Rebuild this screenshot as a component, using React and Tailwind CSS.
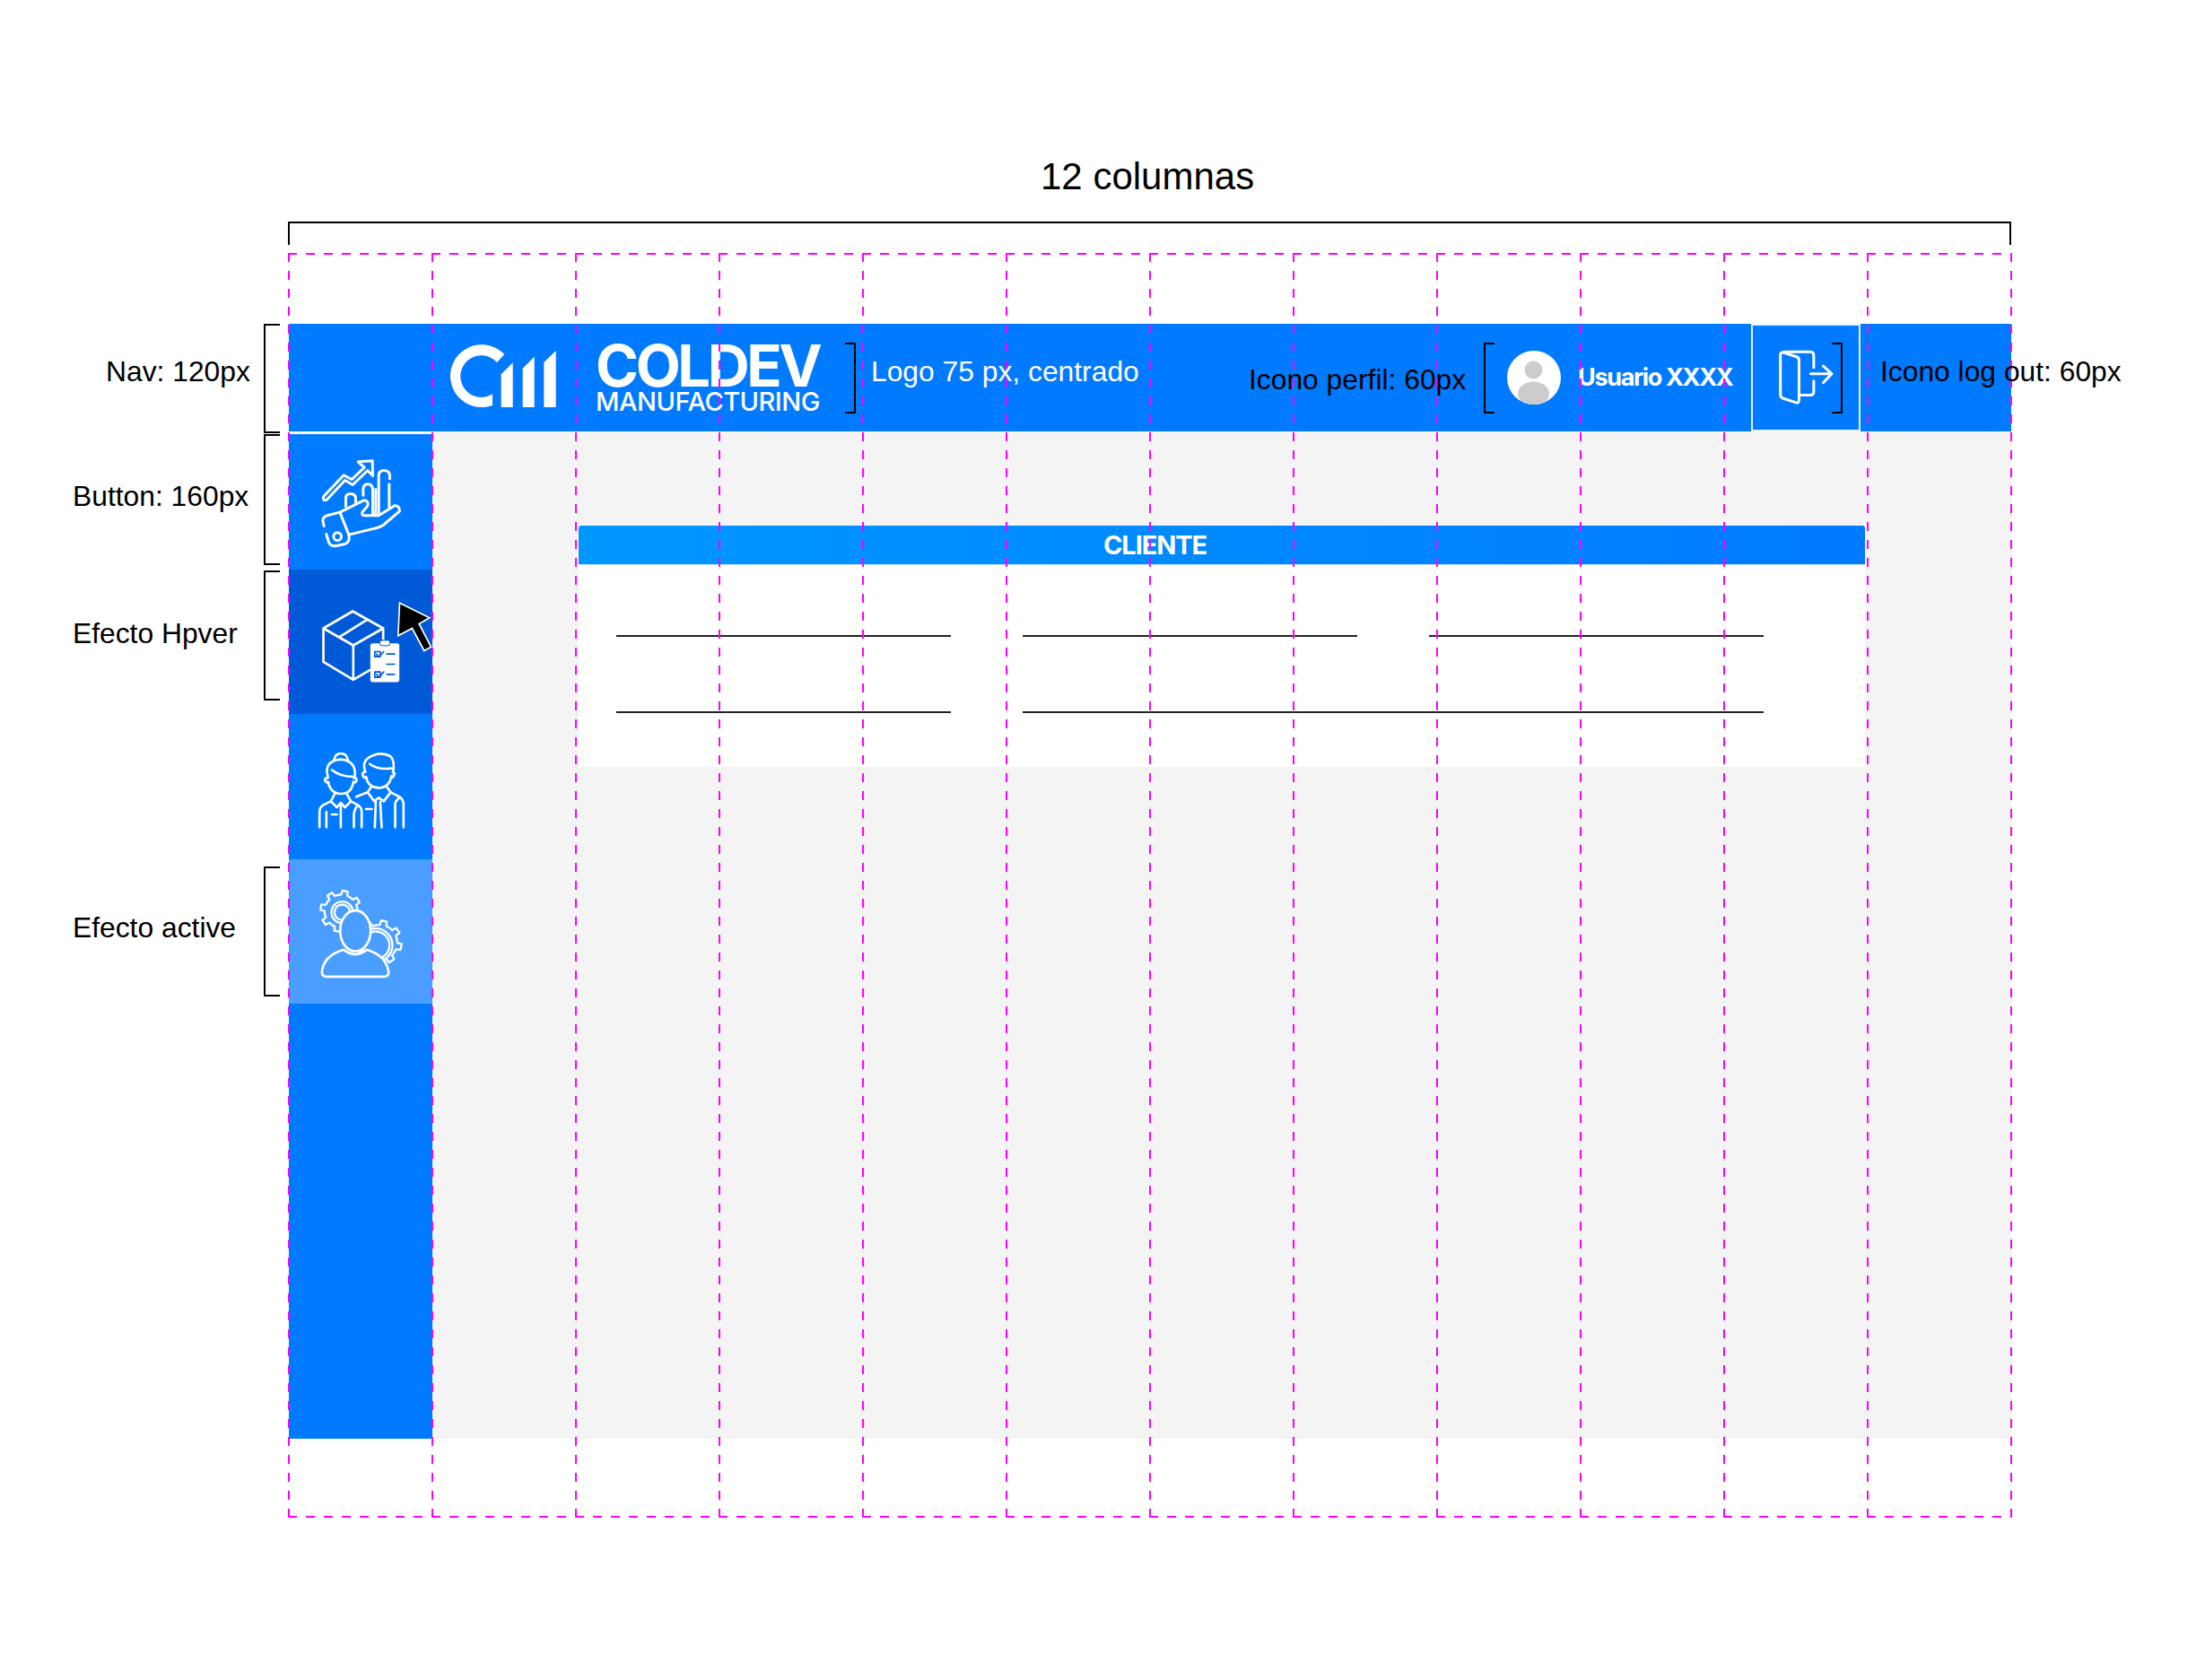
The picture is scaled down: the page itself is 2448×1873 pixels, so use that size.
import React from "react";

const BODY_FONT = "font-['Liberation_Sans',Arial,sans-serif]";
const UI_FONT = "font-['Inter',sans-serif]";

// genera el contorno de un engranaje
const gearPath = (cx, cy, r, teeth) => {
  const pts = [];
  const step = (Math.PI * 2) / teeth;
  for (let i = 0; i < teeth; i++) {
    const a = i * step + 0.2;
    const inner = r * 0.8;
    [
      [a - step * 0.5, inner],
      [a - step * 0.24, inner],
      [a - step * 0.17, r],
      [a + step * 0.17, r],
      [a + step * 0.24, inner],
    ].forEach(([t, d]) => {
      pts.push(`${(cx + Math.cos(t) * d).toFixed(1)} ${(cy + Math.sin(t) * d).toFixed(1)}`);
    });
  }
  return `M${pts.join("L")}Z`;
};

const IconChart = () => (
  <svg viewBox="109.5 73.5 330 330" className="w-[110px] h-[110px]" fill="none" stroke="#fff" strokeWidth="9" strokeLinecap="round" strokeLinejoin="round">
    <path d="M150 220L218 148L245 162L287 122L266 103L314 100L315 150L298 132L248 180L222 165L161 230Q148 236 150 220Z" />
    <path d="M335 275V150Q335 132 352 132Q372 132 372 150V160M370 178V255" />
    <path d="M283 215V198Q283 178 298 178Q315 178 315 198V282M325 195V282" />
    <path d="M225 252V225Q225 210 240 210Q258 210 258 225V237" />
    <path d="M152 318L148 300Q148 287 165 282L205 272L285 232Q302 232 298 250L280 272Q277 283 290 283H335L388 250Q404 248 405 268L350 315Q340 322 325 325L235 347" />
    <path d="M205 272L235 347Q240 372 222 378L190 385Q172 385 168 372L160 345" />
    <circle cx="197" cy="353" r="13" />
  </svg>
);

const IconBox = () => (
  <svg viewBox="109.5 541.5 330 330" className="w-[110px] h-[110px] overflow-visible" fill="none" stroke="#fff" strokeWidth="8" strokeLinecap="round" strokeLinejoin="round">
    <path d="M150 660L248 603L350 660L250 717ZM150 660V772L250 832V717M350 660V700M250 832L305 800M205 688L295 632" />
    <rect x="307" y="710" width="97" height="130" rx="8" fill="#fff" strokeWidth="0" />
    <rect x="338" y="700" width="35" height="18" rx="8" fill="#fff" stroke="#0059d6" strokeWidth="3" />
    <g stroke="#0059d6" strokeWidth="5">
      <path d="M322 738H340V755H322ZM328 746L335 755L352 738" />
      <path d="M322 806H340V824H322ZM328 814L335 824L352 806" />
      <path d="M362 746H388M362 780H388M362 814H388" />
    </g>
    {/* cursor del hover */}
    <path d="M405 575L505 625L470 645L510 722L487 735L447 660L400 685Z" fill="#000" strokeLinejoin="miter" strokeWidth="5" />
  </svg>
);

const IconPeople = () => (
  <svg viewBox="109.5 96 330 330" className="w-[110px] h-[110px]" fill="none" stroke="#fff" strokeWidth="8" strokeLinecap="round" strokeLinejoin="round">
    {/* mujer */}
    <path d="M165 228Q150 175 208 170Q262 175 255 228M185 172Q190 150 208 150Q228 150 232 172M178 205Q205 228 252 228" />
    <path d="M165 245Q175 285 208 285Q245 285 250 245M165 232Q152 232 156 242Q160 248 168 248M252 232Q265 232 260 242Q258 248 250 248" />
    <path d="M188 285L175 310L195 330L208 315L222 330L242 310L228 285M208 315V397" />
    <path d="M175 310L150 322Q137 330 137 345V397M160 397V345M242 310L265 322Q278 330 278 345V397M252 397V350Q255 335 265 322M178 354H195" />
    {/* hombre */}
    <path d="M290 210Q275 170 320 155Q350 145 375 160Q390 175 383 215M305 185Q330 205 378 200" />
    <path d="M292 228Q300 265 335 265Q370 265 378 225M290 212Q278 212 282 224Q285 232 295 232M382 212Q392 215 385 226Q382 232 375 232" />
    <path d="M310 262L298 280L320 310L335 298L352 310L375 280L362 262" />
    <path d="M298 280L260 295M375 280L405 295Q418 305 418 320V397M322 397L325 312M345 397L340 312M390 397V320Q390 310 405 297M292 336H312" />
  </svg>
);

const IconGears = () => (
  <svg viewBox="109.5 580.5 330 330" className="w-[110px] h-[110px]" fill="none" stroke="#fff" strokeWidth="7" strokeLinecap="round" strokeLinejoin="round">
    <path d={gearPath(209, 676, 69, 8)} />
    <circle cx="213" cy="680" r="36" />
    <circle cx="213" cy="680" r="26" />
    <path d={gearPath(338, 781, 74, 8)} />
    <circle cx="325" cy="790" r="56" />
    <circle cx="325" cy="790" r="46" />
    <path d="M218 805Q150 825 145 880Q145 895 160 895H352Q370 895 368 878Q360 825 295 805Q257 835 218 805Z" fill="#4a9eff" strokeWidth="8" />
    <ellipse cx="257" cy="742" rx="51" ry="68" fill="#4a9eff" strokeWidth="8" />
  </svg>
);

const IconLogout = () => (
  <svg viewBox="60 55 200 200" className="w-[67px] h-[67px]" fill="none" stroke="#fff" strokeWidth="9" strokeLinecap="round" strokeLinejoin="round">
    <path d="M74 78Q74 68 84 70L128 84Q136 87 136 95V228Q136 240 124 236L82 222Q74 219 74 210Z" />
    <path d="M84 68H173Q185 68 185 80V120M185 165V200Q185 212 173 212H140" />
    <path d="M175 141H243M217 115L245 141L217 170" />
  </svg>
);

const LogoMark = () => (
  <svg viewBox="695 492 352 210" className="w-[118px] h-[70px] mb-[4px]" fill="#fff">
    <path d="M875 525A105 105 0 1 0 835 696V658A70 70 0 1 1 850 552Z" />
    <path d="M864 592L903 553V702H864Z" />
    <path d="M936 572L975 533V702H936Z" />
    <path d="M1007 552L1047 513V702H1007Z" />
  </svg>
);

const Avatar = () => (
  <svg viewBox="0 0 60 60" className="w-[60px] h-[60px] shrink-0">
    <defs>
      <clipPath id="avatar-clip">
        <circle cx="30" cy="30" r="30" />
      </clipPath>
    </defs>
    <circle cx="30" cy="30" r="30" fill="#fff" />
    <g clipPath="url(#avatar-clip)" fill="#cccccc">
      <circle cx="29.5" cy="21.5" r="10" />
      <ellipse cx="29.5" cy="48" rx="17.5" ry="13.5" />
    </g>
  </svg>
);

const SIDE_ITEMS = [
  { icon: <IconChart />, className: "h-[154px] border-t-[3px] border-white bg-[#007aff]" },
  { icon: <IconBox />, className: "h-[161px] bg-[#0059d6]" },
  { icon: <IconPeople />, className: "h-[162px] bg-[#007aff]" },
  { icon: <IconGears />, className: "h-[161px] bg-[#4a9eff]" },
];

// anotaciones del wireframe
const LABELS = [
  { text: "Nav: 120px", className: "left-[118px] top-[396px] text-black" },
  { text: "Button: 160px", className: "left-[81px] top-[535px] text-black" },
  { text: "Efecto Hpver", className: "left-[81px] top-[688px] text-black" },
  { text: "Efecto active", className: "left-[81px] top-[1016px] text-black" },
  { text: "Logo 75 px, centrado", className: "left-[971px] top-[396px] text-white" },
  { text: "Icono perfil: 60px", className: "left-[1392px] top-[405px] text-black" },
  { text: "Icono log out: 60px", className: "left-[2096px] top-[396px] text-black" },
];

const BRACKETS = [
  "left-[321px] top-[247px] w-[1921px] h-[26px] border-l-2 border-t-2 border-r-2",
  "left-[294px] top-[361px] w-[18px] h-[122px] border-l-2 border-t-2 border-b-2",
  "left-[294px] top-[484px] w-[18px] h-[146px] border-l-2 border-t-2 border-b-2",
  "left-[294px] top-[636px] w-[18px] h-[145px] border-l-2 border-t-2 border-b-2",
  "left-[294px] top-[966px] w-[18px] h-[145px] border-l-2 border-t-2 border-b-2",
  "left-[942px] top-[382px] w-[12px] h-[79px] border-r-2 border-t-2 border-b-2",
  "left-[1654px] top-[382px] w-[12px] h-[79px] border-l-2 border-t-2 border-b-2",
  "left-[2042px] top-[382px] w-[12px] h-[79px] border-r-2 border-t-2 border-b-2",
];

const FieldLine = ({ className }) => <div className={`h-[2px] bg-[#222] ${className}`} />;

export default function App() {
  return (
    <div className={`relative w-[2448px] h-[1873px] overflow-hidden bg-white ${BODY_FONT}`}>
      <div className="pt-[361px] pl-[322px]">
        <div className="w-[1920px]">
          {/* nav */}
          <header className="flex items-center h-[120px] bg-[#007aff] text-white">
            <div className="w-[180px] shrink-0" />
            <LogoMark />
            <div className={`flex flex-col ml-[44px] w-[252px] ${UI_FONT}`}>
              <span className="text-[65px] leading-[50px] font-bold tracking-[-3.4px] whitespace-nowrap">COLDEV</span>
              <span className="mt-[3px] text-[29px] leading-[24px] font-medium tracking-[-0.5px] whitespace-nowrap">MANUFACTURING</span>
            </div>
            <div className="ml-auto flex items-center h-full">
              <Avatar />
              <span className={`ml-[19px] w-[193px] text-[27px] font-bold tracking-[-1.35px] whitespace-nowrap ${UI_FONT}`}>Usuario XXXX</span>
              <button className="flex items-center justify-center w-[122px] h-full border-2 border-white/90">
                <IconLogout />
              </button>
              <div className="w-[168px]" />
            </div>
          </header>

          <div className="flex h-[1123px]">
            {/* sidebar */}
            <aside className="w-[160px] shrink-0 bg-[#007aff]">
              {SIDE_ITEMS.map((item, i) => (
                <div key={i} className={`flex items-center justify-center ${item.className}`}>
                  {item.icon}
                </div>
              ))}
            </aside>

            {/* contenido */}
            <main className="flex-1 bg-[#f4f4f4] pt-[105px] pl-[163px] pr-[163px]">
              <section className="bg-white h-[269px]">
                <div className="h-[44px] flex items-center pl-[585px] rounded-t-[3px] bg-gradient-to-r from-[#0097ff] to-[#007aff] border-b border-[#cfe8fb]">
                  <h2 className={`text-[29px] font-bold tracking-[-1.1px] text-white ${UI_FONT}`}>CLIENTE</h2>
                </div>
                <div className="flex flex-col gap-[83px] pt-[78px] pl-[42px]">
                  <div className="flex">
                    <FieldLine className="w-[373px]" />
                    <FieldLine className="w-[373px] ml-[80px]" />
                    <FieldLine className="w-[373px] ml-[80px]" />
                  </div>
                  <div className="flex">
                    <FieldLine className="w-[373px]" />
                    <FieldLine className="w-[826px] ml-[80px]" />
                  </div>
                </div>
              </section>
            </main>
          </div>
        </div>
      </div>

      {/* guias de las 12 columnas */}
      <div className="absolute left-[321px] top-[282px] w-[1922px] h-[1410px] flex justify-between">
        {Array.from({ length: 13 }).map((_, i) => (
          <div key={i} className="w-[2px] h-full bg-[repeating-linear-gradient(to_bottom,#ff00ff_0_10px,transparent_10px_20px)]" />
        ))}
        <div className="absolute left-0 top-0 w-full h-[2px] bg-[repeating-linear-gradient(to_right,#ff00ff_0_10px,transparent_10px_20px)]" />
        <div className="absolute left-0 bottom-0 w-full h-[2px] bg-[repeating-linear-gradient(to_right,#ff00ff_0_10px,transparent_10px_20px)]" />
      </div>

      <h1 className="absolute left-[1160px] top-[172px] text-[42px] leading-[50px] font-normal text-black whitespace-nowrap">12 columnas</h1>

      {BRACKETS.map((b) => (
        <div key={b} className={`absolute border-black ${b}`} />
      ))}

      {LABELS.map((l) => (
        <span key={l.text} className={`absolute text-[31.8px] leading-[36px] whitespace-nowrap ${l.className}`}>
          {l.text}
        </span>
      ))}
    </div>
  );
}
